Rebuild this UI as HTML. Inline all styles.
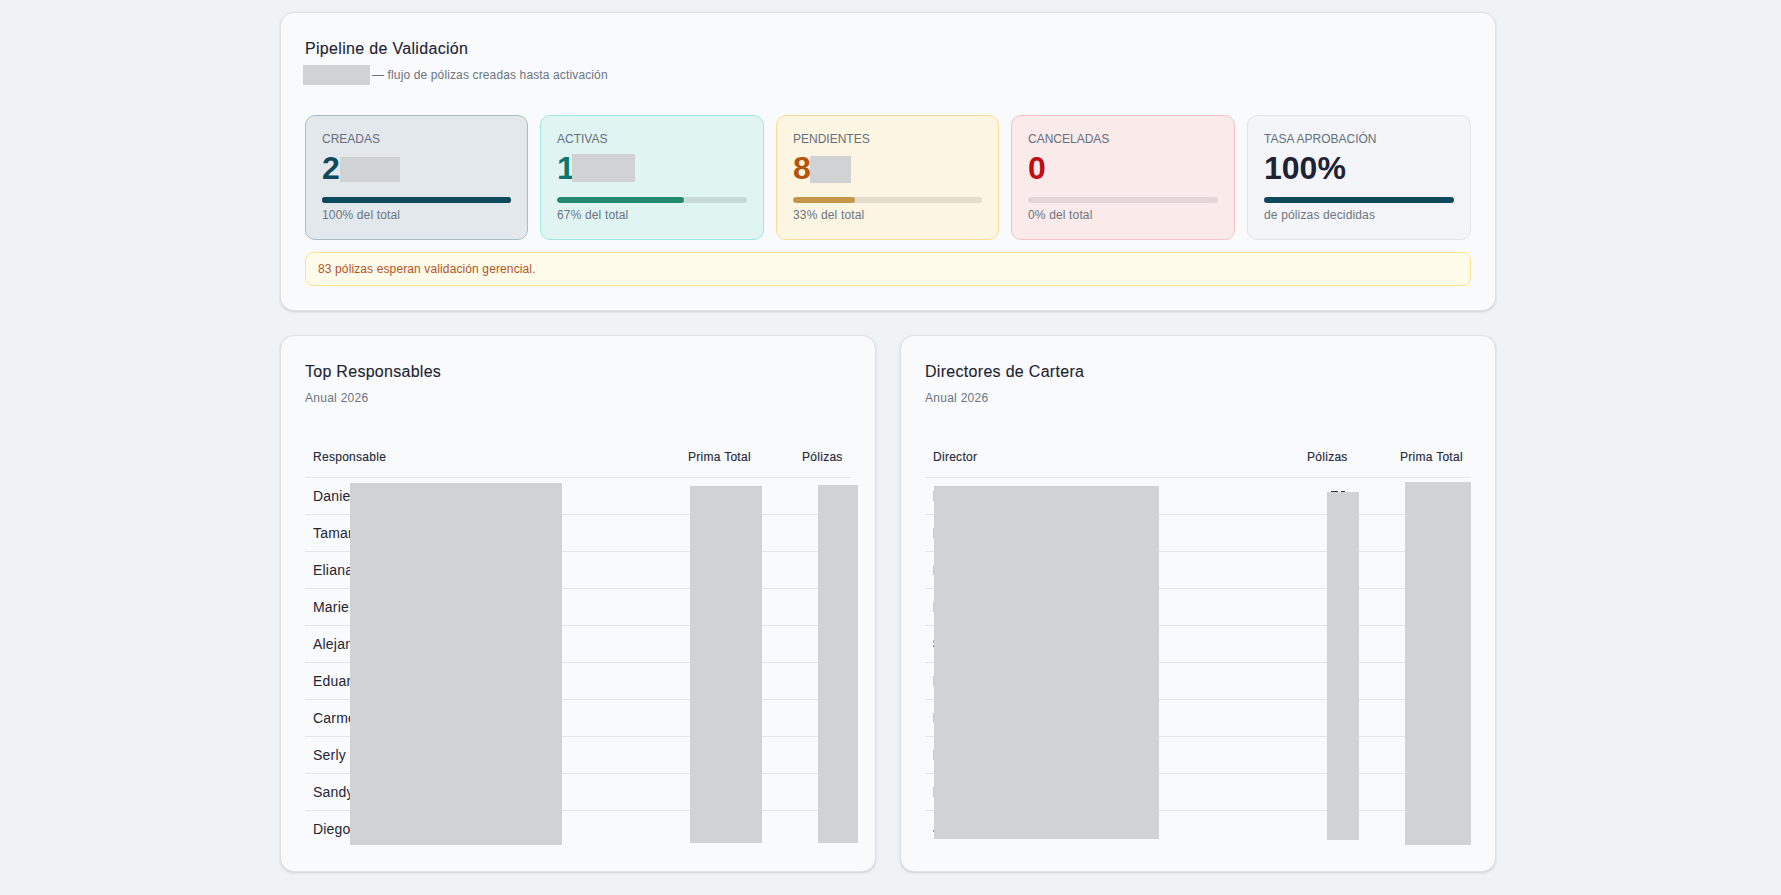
<!DOCTYPE html>
<html><head><meta charset="utf-8">
<style>
*{box-sizing:border-box;margin:0;padding:0}
html,body{width:1781px;height:895px;overflow:hidden;background:#f0f3f6;font-family:"Liberation Sans",sans-serif;color:#1f2433}
.abs{position:absolute}
.card{position:absolute;background:#f9fafc;border:1px solid #dee2e7;border-radius:14px;box-shadow:0 1px 3px rgba(16,24,40,.10),0 1px 2px rgba(16,24,40,.06)}
.t{position:absolute;white-space:nowrap;line-height:1}
.red{position:absolute;background:#d1d2d4}
.stat{position:absolute;top:115px;height:125px;border:1px solid;border-radius:10px}
.lbl{position:absolute;left:16px;top:17px;font-size:12px;color:#646f7b;white-space:nowrap;line-height:1}
.num{position:absolute;left:16px;top:36px;font-size:32px;font-weight:bold;white-space:nowrap;line-height:1}
.bar{position:absolute;left:16px;right:16px;top:81px;height:6px;border-radius:3px;overflow:hidden}
.fill{position:absolute;left:0;top:0;bottom:0;border-radius:3px}
.sub{position:absolute;left:16px;top:93px;font-size:12px;letter-spacing:0.15px;color:#6b7480;white-space:nowrap;line-height:1}
.th{position:absolute;white-space:nowrap;line-height:1;font-size:12px;letter-spacing:0.28px;color:#262a3a;-webkit-text-stroke:0.15px #262a3a}
.td{position:absolute;white-space:nowrap;line-height:1;font-size:14px;letter-spacing:0.2px;color:#1f2433}
.hr{position:absolute;height:1px;background:#e3e6eb}
</style></head><body>

<!-- Card 1 -->
<div class="card" style="left:280px;top:12px;width:1216px;height:299px"></div>
<div class="t" style="left:305px;top:41px;font-size:16px;letter-spacing:0.32px;color:#1f2433;-webkit-text-stroke:0.12px #1f2433">Pipeline de Validación</div>
<div class="red" style="left:303px;top:65px;width:67px;height:20px"></div>
<div class="t" style="left:372px;top:69px;font-size:12px;letter-spacing:0.13px;color:#6b7480">— flujo de pólizas creadas hasta activación</div>

<div class="stat" style="left:305px;width:223px;background:#e3e8ec;border-color:#a9bcc6">
  <div class="lbl">CREADAS</div>
  <div class="num" style="color:#0f4a5c">2</div>
  <div class="red" style="left:34px;top:41px;width:60px;height:25px"></div>
  <div class="bar" style="background:#0f4a5c"><div class="fill" style="width:100%;background:#0f4a5c"></div></div>
  <div class="sub">100% del total</div>
</div>
<div class="stat" style="left:540px;width:224px;background:#e0f4f2;border-color:#a0e8dd">
  <div class="lbl">ACTIVAS</div>
  <div class="num" style="color:#0f766e">1</div>
  <div class="red" style="left:31px;top:38px;width:63px;height:28px"></div>
  <div class="bar" style="background:#c9dbd9"><div class="fill" style="width:67%;background:#23896f"></div></div>
  <div class="sub">67% del total</div>
</div>
<div class="stat" style="left:776px;width:223px;background:#fcf5e2;border-color:#fcdc94">
  <div class="lbl">PENDIENTES</div>
  <div class="num" style="color:#b45309">8</div>
  <div class="red" style="left:33px;top:40px;width:41px;height:27px"></div>
  <div class="bar" style="background:#e6dccb"><div class="fill" style="width:33%;background:#c4954a"></div></div>
  <div class="sub">33% del total</div>
</div>
<div class="stat" style="left:1011px;width:224px;background:#fbeaea;border-color:#f7c0c4">
  <div class="lbl">CANCELADAS</div>
  <div class="num" style="color:#c00d12">0</div>
  <div class="bar" style="background:#e6d4d8"></div>
  <div class="sub">0% del total</div>
</div>
<div class="stat" style="left:1247px;width:224px;background:#f3f5f9;border-color:#e2e5ea">
  <div class="lbl">TASA APROBACIÓN</div>
  <div class="num" style="color:#1e2235">100%</div>
  <div class="bar" style="background:#0f4a5c"></div>
  <div class="sub">de pólizas decididas</div>
</div>

<div class="abs" style="left:305px;top:252px;width:1166px;height:34px;background:#fffbeb;border:1px solid #fde68a;border-radius:8px"></div>
<div class="t" style="left:318px;top:263px;font-size:12px;letter-spacing:0.12px;color:#b4531f">83 pólizas esperan validación gerencial.</div>

<!-- Card 2 -->
<div class="card" style="left:280px;top:335px;width:596px;height:537px"></div>
<div class="t" style="left:305px;top:364px;font-size:16px;letter-spacing:0.28px;-webkit-text-stroke:0.12px #1f2433">Top Responsables</div>
<div class="t" style="left:305px;top:392px;font-size:12px;letter-spacing:0.27px;color:#6b7480">Anual 2026</div>

<!-- Card 3 -->
<div class="card" style="left:900px;top:335px;width:596px;height:537px"></div>
<div class="t" style="left:925px;top:364px;font-size:16px;letter-spacing:0.3px;-webkit-text-stroke:0.12px #1f2433">Directores de Cartera</div>
<div class="t" style="left:925px;top:392px;font-size:12px;letter-spacing:0.27px;color:#6b7480">Anual 2026</div>

<div class="th" style="left:313px;top:451px">Responsable</div>
<div class="th" style="left:688px;top:451px">Prima Total</div>
<div class="th" style="left:802px;top:451px">Pólizas</div>
<div class="hr" style="left:305px;top:477px;width:546px"></div>
<div class="hr" style="left:305px;top:514px;width:546px"></div>
<div class="hr" style="left:305px;top:551px;width:546px"></div>
<div class="hr" style="left:305px;top:588px;width:546px"></div>
<div class="hr" style="left:305px;top:625px;width:546px"></div>
<div class="hr" style="left:305px;top:662px;width:546px"></div>
<div class="hr" style="left:305px;top:699px;width:546px"></div>
<div class="hr" style="left:305px;top:736px;width:546px"></div>
<div class="hr" style="left:305px;top:773px;width:546px"></div>
<div class="hr" style="left:305px;top:810px;width:546px"></div>
<div class="td" style="left:313px;top:489px">Daniel Ramírez</div>
<div class="td" style="left:313px;top:526px">Tamara Ortiz</div>
<div class="td" style="left:313px;top:563px">Eliana Suárez</div>
<div class="td" style="left:313px;top:600px">Marie Castro</div>
<div class="td" style="left:313px;top:637px">Alejandro Ruiz</div>
<div class="td" style="left:313px;top:674px">Eduardo Peña</div>
<div class="td" style="left:313px;top:711px">Carmen López</div>
<div class="td" style="left:313px;top:748px">Serly</div>
<div class="td" style="left:313px;top:785px">Sandy Torres</div>
<div class="td" style="left:313px;top:822px">Diego Morales</div>
<div class="red" style="left:350px;top:483px;width:212px;height:362px"></div>
<div class="red" style="left:690px;top:486px;width:72px;height:357px"></div>
<div class="red" style="left:818px;top:485px;width:40px;height:358px"></div>
<div class="th" style="left:933px;top:451px">Director</div>
<div class="th" style="left:1307px;top:451px">Pólizas</div>
<div class="th" style="left:1400px;top:451px">Prima Total</div>
<div class="hr" style="left:925px;top:477px;width:546px"></div>
<div class="hr" style="left:925px;top:514px;width:546px"></div>
<div class="hr" style="left:925px;top:551px;width:546px"></div>
<div class="hr" style="left:925px;top:588px;width:546px"></div>
<div class="hr" style="left:925px;top:625px;width:546px"></div>
<div class="hr" style="left:925px;top:662px;width:546px"></div>
<div class="hr" style="left:925px;top:699px;width:546px"></div>
<div class="hr" style="left:925px;top:736px;width:546px"></div>
<div class="hr" style="left:925px;top:773px;width:546px"></div>
<div class="hr" style="left:925px;top:810px;width:546px"></div>
<div class="abs" style="left:933px;top:491px;width:1px;height:10px;background:#f6c18a"></div>
<div class="abs" style="left:933px;top:528px;width:1px;height:10px;background:#f6c18a"></div>
<div class="abs" style="left:933px;top:565px;width:1px;height:10px;background:#f6c18a"></div>
<div class="abs" style="left:933px;top:602px;width:1px;height:10px;background:#f6c18a"></div>
<div class="abs" style="left:933px;top:640px;width:1px;height:3px;background:#e9a25a"></div>
<div class="abs" style="left:933px;top:645px;width:1px;height:2px;background:#b0703a"></div>
<div class="abs" style="left:933px;top:676px;width:1px;height:10px;background:#f6c18a"></div>
<div class="abs" style="left:933px;top:713px;width:1px;height:10px;background:#f6c18a"></div>
<div class="abs" style="left:933px;top:750px;width:1px;height:10px;background:#f6c18a"></div>
<div class="abs" style="left:933px;top:787px;width:1px;height:10px;background:#f6c18a"></div>
<div class="abs" style="left:933px;top:830px;width:1px;height:2px;background:#d48a40"></div>
<div class="abs" style="left:1331px;top:491px;width:7px;height:1px;background:#2a3040"></div>
<div class="abs" style="left:1341px;top:491px;width:4px;height:1px;background:#3a3040"></div>
<div class="red" style="left:934px;top:486px;width:225px;height:353px"></div>
<div class="red" style="left:1327px;top:492px;width:32px;height:348px"></div>
<div class="red" style="left:1405px;top:482px;width:66px;height:363px"></div>
</body></html>
